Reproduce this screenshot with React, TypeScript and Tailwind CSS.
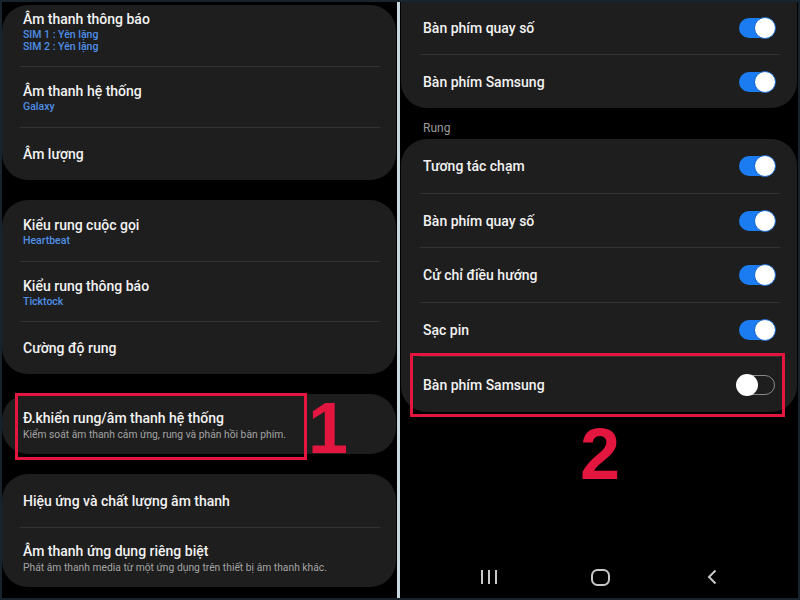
import React from "react";

const Divider = ({ side }: { side: "l" | "r" }) => (
  <div className={side === "l" ? "h-px bg-[#343434] ml-[18px] mr-[16px]" : "h-px bg-[#343434] ml-[19px] mr-[17px]"} />
);

const Title = ({ children }: { children: React.ReactNode }) => (
  <div className="text-[14px] leading-[20px] text-[#f2f2f2] font-medium">{children}</div>
);
const Sub = ({ children }: { children: React.ReactNode }) => (
  <div className="text-[10.5px] leading-[12px] text-[#4f8fe6] font-medium">{children}</div>
);
const Desc = ({ children }: { children: React.ReactNode }) => (
  <div className="text-[10.3px] leading-[13px] text-[#a3a3a3]">{children}</div>
);

const Toggle = ({ on }: { on: boolean }) =>
  on ? (
    <div className="relative w-[36px] h-[20px] rounded-full bg-[#1b7cf2]">
      <div className="absolute right-[-1px] top-[-1px] w-[22px] h-[22px] rounded-full bg-white border border-[#1566c9]" />
    </div>
  ) : (
    <div className="relative w-[38px] h-[20px] rounded-full border-[1.5px] border-[#8a8a8a]">
      <div className="absolute left-[-2px] top-[-2px] w-[22px] h-[22px] rounded-full bg-white" />
    </div>
  );

const TRow = ({ label, on, h }: { label: string; on: boolean; h: string }) => (
  <div className={`${h} flex items-center justify-between pl-[22px] pr-[22px]`}>
    <Title>{label}</Title>
    <Toggle on={on} />
  </div>
);

export default function App() {
  return (
    <div
      className="relative w-[800px] h-[600px] bg-[#17242d] p-[2px] flex overflow-hidden"
      style={{ fontFamily: "Roboto, 'Noto Sans', sans-serif" }}
    >
      {/* Left panel */}
      <div className="w-[395px] h-full bg-black flex flex-col gap-[20px] pt-[3px] pr-[1px]">
        <div className="rounded-[26px] bg-[#1e1e1e] flex flex-col">
          <div className="h-[61px] flex flex-col justify-start pt-[4px] px-[21px]">
            <Title>Âm thanh thông báo</Title>
            <Sub>SIM 1 : Yên lặng</Sub>
            <Sub>SIM 2 : Yên lặng</Sub>
          </div>
          <Divider side="l" />
          <div className="h-[60px] flex flex-col justify-center px-[21px]">
            <Title>Âm thanh hệ thống</Title>
            <Sub>Galaxy</Sub>
          </div>
          <Divider side="l" />
          <div className="h-[52px] flex flex-col justify-center px-[21px]">
            <Title>Âm lượng</Title>
          </div>
        </div>

        <div className="rounded-[26px] bg-[#1e1e1e] flex flex-col">
          <div className="h-[61px] flex flex-col justify-center px-[21px]">
            <Title>Kiểu rung cuộc gọi</Title>
            <Sub>Heartbeat</Sub>
          </div>
          <Divider side="l" />
          <div className="h-[59px] flex flex-col justify-center px-[21px]">
            <Title>Kiểu rung thông báo</Title>
            <Sub>Ticktock</Sub>
          </div>
          <Divider side="l" />
          <div className="h-[52px] flex flex-col justify-center px-[21px]">
            <Title>Cường độ rung</Title>
          </div>
        </div>

        <div className="rounded-[26px] bg-[#1e1e1e] flex flex-col">
          <div className="h-[60px] flex flex-col justify-center px-[21px]">
            <Title>Đ.khiển rung/âm thanh hệ thống</Title>
            <Desc>Kiểm soát âm thanh cảm ứng, rung và phản hồi bàn phím.</Desc>
          </div>
        </div>

        <div className="rounded-[26px] bg-[#1e1e1e] flex flex-col">
          <div className="h-[53px] flex flex-col justify-center px-[21px]">
            <Title>Hiệu ứng và chất lượng âm thanh</Title>
          </div>
          <Divider side="l" />
          <div className="h-[59px] flex flex-col justify-center px-[21px]">
            <Title>Âm thanh ứng dụng riêng biệt</Title>
            <Desc>Phát âm thanh media từ một ứng dụng trên thiết bị âm thanh khác.</Desc>
          </div>
        </div>
      </div>

      {/* Separator */}
      <div className="w-[3px] h-full bg-[#c9d7de]" />

      {/* Right panel */}
      <div className="flex-1 h-full bg-black flex flex-col px-[1px]">
        <div className="rounded-b-[26px] bg-[#1e1e1e] flex flex-col">
          <TRow label="Bàn phím quay số" on h="h-[52px]" />
          <Divider side="r" />
          <TRow label="Bàn phím Samsung" on h="h-[53px]" />
        </div>
        <div className="h-[31px] pt-[13px] pl-[22px] text-[12px] leading-[14px] text-[#9b9b9b]">Rung</div>
        <div className="rounded-[26px] bg-[#1e1e1e] flex flex-col">
          <TRow label="Tương tác chạm" on h="h-[54px]" />
          <Divider side="r" />
          <TRow label="Bàn phím quay số" on h="h-[53px]" />
          <Divider side="r" />
          <TRow label="Cử chỉ điều hướng" on h="h-[54px]" />
          <Divider side="r" />
          <TRow label="Sạc pin" on h="h-[53px]" />
          <Divider side="r" />
          <TRow label="Bàn phím Samsung" on={false} h="h-[55px]" />
        </div>
        <div className="flex-1" />
        <div className="h-[42px] flex items-start pt-[13px] pl-[79px]">
          <svg width="18" height="16" viewBox="0 0 18 16">
            <rect x="1" y="1" width="2" height="14" fill="#c8c8c8" />
            <rect x="8" y="1" width="2" height="14" fill="#c8c8c8" />
            <rect x="15" y="1" width="2" height="14" fill="#c8c8c8" />
          </svg>
          <svg width="19" height="17" viewBox="0 0 19 17" className="ml-[93px]">
            <rect x="1" y="1" width="17" height="15" rx="5.5" fill="none" stroke="#c8c8c8" strokeWidth="2" />
          </svg>
          <svg width="12" height="16" viewBox="0 0 12 16" className="ml-[96px]">
            <path d="M9.5 1.5 L3 8 L9.5 14.5" fill="none" stroke="#c8c8c8" strokeWidth="2" />
          </svg>
        </div>
      </div>

      {/* Annotations */}
      <div className="absolute left-[15px] top-[393px] w-[292px] h-[67px] border-[3px] border-[#e3163f]" />
      <div
        className="absolute left-[308px] top-[392px] text-[72px] leading-[72px] font-bold text-[#e3163f]"
        style={{ fontFamily: "'Liberation Sans', Arial, sans-serif" }}
      >
        1
      </div>
      <div className="absolute left-[410px] top-[353px] w-[375px] h-[64px] border-[3px] border-[#e3163f]" />
      <div
        className="absolute left-[580px] top-[418px] text-[72px] leading-[72px] font-bold text-[#e3163f]"
        style={{ fontFamily: "'Liberation Sans', Arial, sans-serif" }}
      >
        2
      </div>
    </div>
  );
}
